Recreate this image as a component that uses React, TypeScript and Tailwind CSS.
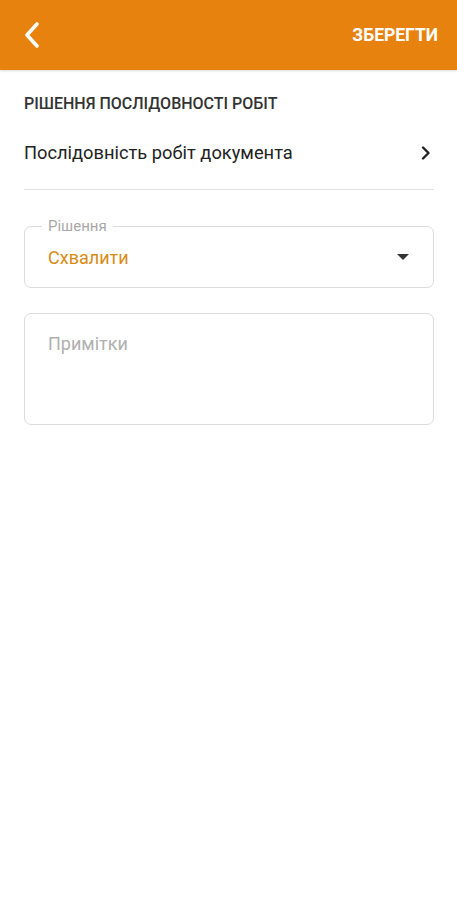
import React from 'react';

const App = () => {
  return (
    <div className="min-h-[900px] w-full bg-white font-['Roboto',sans-serif]">
      <header className="flex h-[70px] items-center justify-between bg-[#e8820f] pl-[22px] pr-[19px] shadow-[0_1px_2px_rgba(0,0,0,0.15)]">
        <svg width="20" height="28" viewBox="0 0 20 28" fill="none">
          <path d="M15 3 L5 14 L15 25" stroke="white" strokeWidth="3.6" strokeLinecap="round" strokeLinejoin="round" />
        </svg>
        <span className="text-[17.5px] font-bold text-white">ЗБЕРЕГТИ</span>
      </header>

      <div className="pl-[24px] pr-[23px]">
        <h2 className="mt-[24px] text-[16px] leading-[20px] font-medium text-[#333]">РІШЕННЯ ПОСЛІДОВНОСТІ РОБІТ</h2>

        <div className="flex h-[76px] items-center justify-between border-b border-[#e2e2e2] pt-[3px]">
          <span className="text-[18.3px] leading-[24px] text-[#222]">Послідовність робіт документа</span>
          <svg width="12" height="16" viewBox="0 0 12 16" className="mr-[2px]">
            <path d="M3 2.5 L8.5 8 L3 13.5" stroke="#222" strokeWidth="2.4" fill="none" strokeLinecap="round" strokeLinejoin="round" />
          </svg>
        </div>

        <div className="relative mt-[36px] flex h-[62px] items-center justify-between rounded-[7px] border border-[#dcdcdc] pl-[23px] pr-[23px]">
          <span className="absolute -top-[11px] left-[17px] bg-white px-[6px] text-[15px] leading-[20px] text-[#a8a8a8]">Рішення</span>
          <span className="mt-[2px] text-[18px] leading-[24px] text-[#d98a14]">Схвалити</span>
          <svg width="14" height="8" viewBox="0 0 14 8">
            <path d="M1 1 L13 1 L7 7 Z" fill="#333" />
          </svg>
        </div>

        <div className="mt-[25px] h-[112px] rounded-[7px] border border-[#dcdcdc] pl-[23px] pt-[18px]">
          <span className="text-[18px] leading-[24px] text-[#b0b0b0]">Примітки</span>
        </div>
      </div>
    </div>
  );
};

export default App;
